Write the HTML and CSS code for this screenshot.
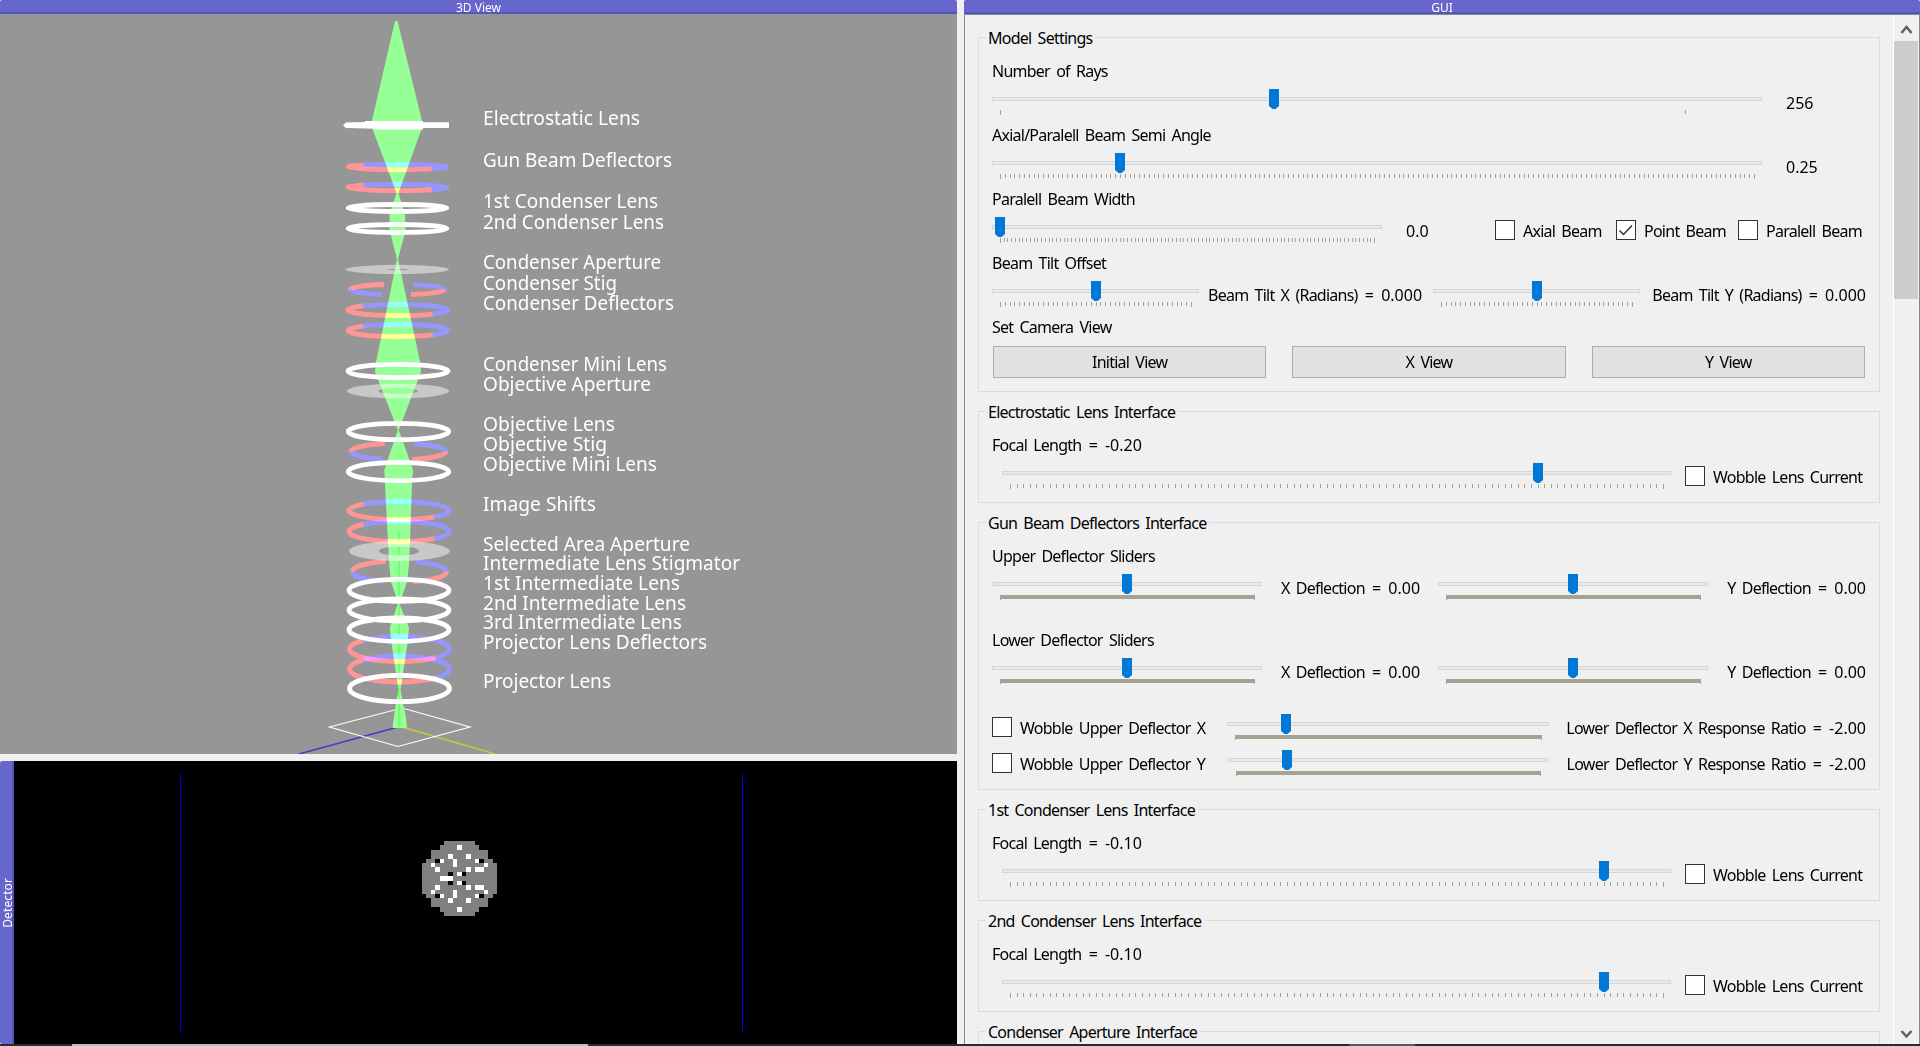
FILE: index.html
```html
<!DOCTYPE html>
<html lang="en">
<head>
<meta charset="utf-8">
<title>3D View</title>
<link rel="stylesheet" href="styles.css">
</head>
<body>
<div class="app">
<main class="workspace">
  <div class="left-dock">
    <section class="dock view-dock">
      <header class="dock-title">3D View</header>
      <svg class="scene" viewBox="0 14 957 740" width="957" height="740">
        <g class="thin">
          <path class="axis-x" d="M398 727L299 754"/>
          <path class="axis-y" d="M402 727L495 754"/>
          <path class="floor" d="M329.500 727L402 708L470 727L398 746.500Z"/>
        </g>
        <path class="beam" d="M395 21h2.500L423 125L398.500 193L405 215L405.700 230L398 259L415 338L420 362L421 372L398.800 430L413 470L412 485L410 542L409 565L407 582L402 596L399 603L404 615L409 628L407 647L405 660L403 673L400.500 690L403 703L406 717L407 728H392.500L394 717L396 703L398.500 690L396 673L394 660L392 647L389.700 628L394 615L398 603L396 596L391 582L389.300 565L388 542L385 485L384.300 470L397.800 430L375 372L376 362L381 338L397 259L389.500 230L389.500 215L396.500 193L371 125Z"/>
        <path class="beam-core" d="M399 531V727"/>
        <g class="aperture">
          <path d="M345.500 269.500a51.700 4.700 0 1 0 103.400 0a51.700 4.700 0 1 0-103.400 0ZM387 269.500a10.500.6 0 1 0 21 0a10.500.6 0 1 0-21 0Z"/>
          <path d="M347 391a51 7.300 0 1 0 102 0a51 7.300 0 1 0-102 0ZM378 391a20 3 0 1 0 40 0a20 3 0 1 0-40 0Z"/>
          <path d="M349 551a50.300 10 0 1 0 100.600 0a50.300 10 0 1 0-100.600 0ZM379 551a20 4.500 0 1 0 40 0a20 4.500 0 1 0-40 0Z"/>
        </g>
        <g class="red">
          <g class="half">
            <ellipse pathLength="100" cx="397.500" cy="167" rx="49.500" ry="2.700"/>
            <ellipse pathLength="100" cx="397.500" cy="187.500" rx="49.500" ry="3.100"/>
            <ellipse pathLength="100" cx="398" cy="310" rx="50" ry="5.600"/>
            <ellipse pathLength="100" cx="398" cy="330.500" rx="50" ry="6.100"/>
            <ellipse pathLength="100" cx="399" cy="510.500" rx="50" ry="9"/>
            <ellipse pathLength="100" cx="399" cy="531.500" rx="50" ry="10"/>
            <ellipse pathLength="100" cx="399.500" cy="649" rx="50" ry="12.500"/>
            <ellipse pathLength="100" cx="399.500" cy="669" rx="50" ry="13"/>
          </g>
          <g class="quarter">
            <ellipse pathLength="100" cx="397.500" cy="289.500" rx="47.500" ry="5.200"/>
            <ellipse pathLength="100" cx="398.500" cy="451.500" rx="47.500" ry="8.200"/>
            <ellipse pathLength="100" cx="399.500" cy="571.500" rx="47" ry="10.600"/>
          </g>
        </g>
        <g class="blue">
          <g class="half">
            <ellipse pathLength="100" cx="397.500" cy="167" rx="49.500" ry="2.700"/>
            <ellipse pathLength="100" cx="397.500" cy="187.500" rx="49.500" ry="3.100"/>
            <ellipse pathLength="100" cx="398" cy="310" rx="50" ry="5.600"/>
            <ellipse pathLength="100" cx="398" cy="330.500" rx="50" ry="6.100"/>
            <ellipse pathLength="100" cx="399" cy="510.500" rx="50" ry="9"/>
            <ellipse pathLength="100" cx="399" cy="531.500" rx="50" ry="10"/>
            <ellipse pathLength="100" cx="399.500" cy="649" rx="50" ry="12.500"/>
            <ellipse pathLength="100" cx="399.500" cy="669" rx="50" ry="13"/>
          </g>
          <g class="quarter">
            <ellipse pathLength="100" cx="397.500" cy="289.500" rx="47.500" ry="5.200"/>
            <ellipse pathLength="100" cx="398.500" cy="451.500" rx="47.500" ry="8.200"/>
            <ellipse pathLength="100" cx="399.500" cy="571.500" rx="47" ry="10.600"/>
          </g>
        </g>
        <g class="lens">
          <path d="M343 125.300L346 122.500L365 122V121H423V122.300H449V128H423V129.500H376V128.700L346 128Z"/>
          <ellipse cx="397.500" cy="208" rx="49.500" ry="3.500"/>
          <ellipse cx="397.500" cy="228.500" rx="49.500" ry="4"/>
          <ellipse cx="398" cy="371" rx="50" ry="6.700"/>
          <ellipse cx="398.500" cy="431.500" rx="50.200" ry="8.200"/>
          <ellipse cx="398.500" cy="471.500" rx="50.200" ry="9.200"/>
          <ellipse cx="399" cy="590.300" rx="50" ry="11"/>
          <ellipse cx="399" cy="610" rx="50" ry="11"/>
          <ellipse cx="399" cy="629.700" rx="50" ry="11.700"/>
          <ellipse cx="399.500" cy="688.500" rx="50" ry="13.200"/>
        </g>
        <g class="labels">
          <text x="483" y="124.500" textLength="157" lengthAdjust="spacingAndGlyphs">Electrostatic Lens</text>
          <text x="483" y="166.500" textLength="189" lengthAdjust="spacingAndGlyphs">Gun Beam Deflectors</text>
          <text x="483" y="207.500" textLength="175" lengthAdjust="spacingAndGlyphs">1st Condenser Lens</text>
          <text x="483" y="228.500" textLength="181" lengthAdjust="spacingAndGlyphs">2nd Condenser Lens</text>
          <text x="483" y="268.500" textLength="178" lengthAdjust="spacingAndGlyphs">Condenser Aperture</text>
          <text x="483" y="289.500" textLength="134" lengthAdjust="spacingAndGlyphs">Condenser Stig</text>
          <text x="483" y="309.500" textLength="191" lengthAdjust="spacingAndGlyphs">Condenser Deflectors</text>
          <text x="483" y="370.500" textLength="184" lengthAdjust="spacingAndGlyphs">Condenser Mini Lens</text>
          <text x="483" y="390.500" textLength="168" lengthAdjust="spacingAndGlyphs">Objective Aperture</text>
          <text x="483" y="430.500" textLength="132" lengthAdjust="spacingAndGlyphs">Objective Lens</text>
          <text x="483" y="450.500" textLength="124" lengthAdjust="spacingAndGlyphs">Objective Stig</text>
          <text x="483" y="470.500" textLength="174" lengthAdjust="spacingAndGlyphs">Objective Mini Lens</text>
          <text x="483" y="510.500" textLength="113" lengthAdjust="spacingAndGlyphs">Image Shifts</text>
          <text x="483" y="550.500" textLength="207" lengthAdjust="spacingAndGlyphs">Selected Area Aperture</text>
          <text x="483" y="569.500" textLength="257" lengthAdjust="spacingAndGlyphs">Intermediate Lens Stigmator</text>
          <text x="483" y="589.500" textLength="197" lengthAdjust="spacingAndGlyphs">1st Intermediate Lens</text>
          <text x="483" y="609.500" textLength="203" lengthAdjust="spacingAndGlyphs">2nd Intermediate Lens</text>
          <text x="483" y="628.500" textLength="199" lengthAdjust="spacingAndGlyphs">3rd Intermediate Lens</text>
          <text x="483" y="648.500" textLength="224" lengthAdjust="spacingAndGlyphs">Projector Lens Deflectors</text>
          <text x="483" y="687.500" textLength="128" lengthAdjust="spacingAndGlyphs">Projector Lens</text>
        </g>
      </svg>
    </section>
    <section class="dock detector-dock">
      <header class="dock-title side-title"><span>Detector</span></header>
      <svg class="detector" viewBox="14 761 943 283" width="943" height="283">
        <path class="roi" d="M180 774h1v259h-1zM742 774h1v259h-1z"/>
        <g transform="translate(422 841) scale(4.412)">
          <path fill="#808080" d="M5 0h7v1h1v1h2v2h1v1h1v7h-1v1h-1v2h-2v1h-1v1h-7v-1h-1v-1h-2v-2h-1v-1h-1v-7h1v-1h1v-2h2v-1h1z"/>
          <path fill="#000" d="M3 4h1v1h-1zM13 4h1v1h-1zM6 7h1v1h-1zM9 7h1v1h-1zM6 9h1v1h-1zM9 9h1v1h-1zM3 12h1v1h-1zM13 12h1v1h-1z"/>
          <path fill="#fff" d="M8 1h1v1h-1zM6 3h1v1h-1zM10 3h1v1h-1zM4 4h1v1h-1zM7 4h1v2h-1zM12 4h1v1h-1zM2 5h1v1h-1zM14 5h1v1h-1zM3 6h1v1h-1zM10 6h1v1h-1zM12 6h2v1h-2zM8 7h1v1h-1zM4 8h3v1h-3zM8 9h1v1h-1zM3 10h1v1h-1zM10 10h1v1h-1zM12 10h2v1h-2zM2 11h1v1h-1zM7 11h1v2h-1zM14 11h1v1h-1zM4 12h1v1h-1zM12 12h1v1h-1zM6 13h1v1h-1zM10 13h1v1h-1zM8 15h1v1h-1z"/>
        </g>
      </svg>
    </section>
  </div>

  <section class="dock gui-dock">
    <header class="dock-title">GUI</header>
    <div class="scroll-area">
      <div class="panel">
        <fieldset class="group model">
          <legend>Model Settings</legend>
          <div class="label">Number of Rays</div>
          <div class="row">
            <div class="slider w770"><svg class="ticks"><path class="end" d="M8.500 0v5"/><path class="end" d="M693.500 0v4"/></svg><i class="handle" style="left:277px"></i></div>
            <span class="value g24"><span class="num">256</span></span>
          </div>
          <div class="label">Axial/Paralell Beam Semi Angle</div>
          <div class="row">
            <div class="slider w770"><svg class="ticks"><path class="minor" stroke-dasharray="1 3.803" d="M8 2h755"/><path class="end" d="M8.500 0v5M762.500 0v5"/></svg><i class="handle" style="left:123px"></i></div>
            <span class="value g24"><span class="num">0.25</span></span>
          </div>
          <div class="label">Paralell Beam Width</div>
          <div class="row">
            <div class="slider w390"><svg class="ticks"><path class="minor" stroke-dasharray="1 2.740" d="M8 2h375"/><path class="end" d="M8.500 0v5M382.500 0v5"/></svg><i class="handle" style="left:3px"></i></div>
            <span class="value g24"><span class="num">0.0</span></span>
            <div class="checks">
              <label class="check"><i class="box"></i><span>Axial Beam</span></label>
              <label class="check"><i class="box"><svg viewBox="0 0 18 18"><path d="M2.500 9.500L6.500 13.500L15 4.500"/></svg></i><span>Point Beam</span></label>
              <label class="check"><i class="box"></i><span>Paralell Beam</span></label>
            </div>
          </div>
          <div class="label">Beam Tilt Offset</div>
          <div class="row">
            <div class="slider w207"><svg class="ticks"><path class="minor" stroke-dasharray="1 3.775" d="M8 2h192"/><path class="end" d="M8.500 0v5M199.500 0v5"/></svg><i class="handle" style="left:99px"></i></div>
            <span class="value tilt">Beam Tilt X (Radians)<span class="num"> = 0.000</span></span>
            <div class="slider w207"><svg class="ticks"><path class="minor" stroke-dasharray="1 3.775" d="M8 2h192"/><path class="end" d="M8.500 0v5M199.500 0v5"/></svg><i class="handle" style="left:99px"></i></div>
            <span class="value last">Beam Tilt Y (Radians)<span class="num"> = 0.000</span></span>
          </div>
          <div class="label">Set Camera View</div>
          <div class="buttons">
            <button>Initial View</button><button>X View</button><button>Y View</button>
          </div>
        </fieldset>

        <fieldset class="group lens-group">
          <legend>Electrostatic Lens Interface</legend>
          <div class="label">Focal Length<span class="num"> = -0.20</span></div>
          <div class="row inset">
            <div class="slider w669"><svg class="ticks"><path class="minor" stroke-dasharray="1 5.596" d="M8 2h654"/><path class="end" d="M8.500 0v5M661.500 0v5"/></svg><i class="handle" style="left:531px"></i></div>
            <label class="check wobble"><i class="box"></i><span>Wobble Lens Current</span></label>
          </div>
        </fieldset>

        <fieldset class="group deflector-group">
          <legend>Gun Beam Deflectors Interface</legend>
          <div class="label">Upper Deflector Sliders</div>
          <div class="row">
            <div class="slider w270"><svg class="ticks"><path class="minor" d="M8 2h255"/><path class="end" d="M8.500 0v5M262.500 0v5"/></svg><i class="handle" style="left:130px"></i></div>
            <span class="value defl">X Deflection<span class="num"> = 0.00</span></span>
            <div class="slider w270"><svg class="ticks"><path class="minor" d="M8 2h255"/><path class="end" d="M8.500 0v5M262.500 0v5"/></svg><i class="handle" style="left:130px"></i></div>
            <span class="value last">Y Deflection<span class="num"> = 0.00</span></span>
          </div>
          <div class="label spaced">Lower Deflector Sliders</div>
          <div class="row">
            <div class="slider w270"><svg class="ticks"><path class="minor" d="M8 2h255"/><path class="end" d="M8.500 0v5M262.500 0v5"/></svg><i class="handle" style="left:130px"></i></div>
            <span class="value defl">X Deflection<span class="num"> = 0.00</span></span>
            <div class="slider w270"><svg class="ticks"><path class="minor" d="M8 2h255"/><path class="end" d="M8.500 0v5M262.500 0v5"/></svg><i class="handle" style="left:130px"></i></div>
            <span class="value last">Y Deflection<span class="num"> = 0.00</span></span>
          </div>
          <div class="row compact first">
            <label class="check upper"><i class="box"></i><span>Wobble Upper Deflector X</span></label>
            <div class="slider w322"><svg class="ticks"><path class="minor" d="M8 2h307"/><path class="end" d="M8.500 0v5M314.500 0v5"/></svg><i class="handle" style="left:54px"></i></div>
            <span class="value last">Lower Deflector X Response Ratio<span class="num"> = -2.00</span></span>
          </div>
          <div class="row compact">
            <label class="check upper upper-y"><i class="box"></i><span>Wobble Upper Deflector Y</span></label>
            <div class="slider w320"><svg class="ticks"><path class="minor" d="M8 2h305"/><path class="end" d="M8.500 0v5M312.500 0v5"/></svg><i class="handle" style="left:54px"></i></div>
            <span class="value last">Lower Deflector Y Response Ratio<span class="num"> = -2.00</span></span>
          </div>
        </fieldset>

        <fieldset class="group lens-group">
          <legend>1st Condenser Lens Interface</legend>
          <div class="label">Focal Length<span class="num"> = -0.10</span></div>
          <div class="row inset">
            <div class="slider w669"><svg class="ticks"><path class="minor" stroke-dasharray="1 5.596" d="M8 2h654"/><path class="end" d="M8.500 0v5M661.500 0v5"/></svg><i class="handle" style="left:597px"></i></div>
            <label class="check wobble"><i class="box"></i><span>Wobble Lens Current</span></label>
          </div>
        </fieldset>

        <fieldset class="group lens-group">
          <legend>2nd Condenser Lens Interface</legend>
          <div class="label">Focal Length<span class="num"> = -0.10</span></div>
          <div class="row inset">
            <div class="slider w669"><svg class="ticks"><path class="minor" stroke-dasharray="1 5.596" d="M8 2h654"/><path class="end" d="M8.500 0v5M661.500 0v5"/></svg><i class="handle" style="left:597px"></i></div>
            <label class="check wobble"><i class="box"></i><span>Wobble Lens Current</span></label>
          </div>
        </fieldset>

        <fieldset class="group lens-group">
          <legend>Condenser Aperture Interface</legend>
        </fieldset>
      </div>
      <div class="scrollbar">
        <svg class="arrow" viewBox="0 0 24 26" width="24" height="26"><path d="M7.500 18L12.500 12L17.500 18"/></svg>
        <div class="thumb"></div>
        <svg class="arrow" viewBox="0 0 24 26" width="24" height="26"><path d="M7.500 13L12.500 18.500L17.500 13"/></svg>
      </div>
    </div>
  </section>
</main>
<footer class="strip"><div class="strip-light"></div><div class="strip-mid"></div></footer>
</div>
</body>
</html>
```
FILE: styles.css
```css
* { box-sizing: border-box; }

body {
  margin: 0;
  width: 1920px;
  height: 1046px;
  overflow: hidden;
  background: #f0f0f0;
  color: #000;
  font: 16px/24px "Noto Sans", sans-serif;
}

.app { display: flex; flex-direction: column; height: 1046px; }
.workspace { display: flex; gap: 7px; height: 1044px; }
.left-dock { display: flex; flex-direction: column; gap: 7px; width: 957px; }
.dock { display: flex; flex-direction: column; }
.gui-dock { width: 956px; }

.dock-title {
  height: 14px;
  background: #6666cc;
  border-bottom: 2px solid #5555bb;
  border-radius: 2px 2px 0 0;
  color: #fff;
  font-size: 12px;
  line-height: 15px;
  text-align: center;
}

.scene { display: block; background: #969696; }
.detector-dock { flex-direction: row; height: 283px; }
.side-title {
  display: flex;
  align-items: center;
  justify-content: center;
  width: 14px;
  height: 283px;
  border-bottom: 0;
  border-right: 2px solid #5555bb;
  border-radius: 2px 0 0 2px;
}
.side-title span {
  writing-mode: vertical-rl;
  transform: rotate(180deg);
  margin-left: 3px;
  line-height: 14px;
  letter-spacing: 0.1px;
}
.detector { display: block; background: #000; shape-rendering: crispEdges; }
.roi { fill: #0000e0; }

.thin { fill: none; stroke-width: 1.2; }
.axis-x { stroke: #3f3fc8; stroke-width: 1.5; }
.axis-y { stroke: #c8c83c; stroke-width: 1.5; }
.floor { stroke: #fff; }
.beam { fill: #96ff96; }
.beam-core { stroke: #5cff5c; stroke-width: 1.2; }
.aperture path { fill: #c8c8c8; fill-rule: evenodd; mix-blend-mode: lighten; }
.red ellipse, .blue ellipse, .lens ellipse { fill: none; stroke-width: 4.8; }
.red, .blue, .lens, .aperture { mix-blend-mode: lighten; }
.red { stroke: #ff9696; }
.blue { stroke: #9696ff; }
.lens { stroke: #fff; }
.lens path { fill: #fff; stroke: none; }

/* deflectors are two half rings, stigmators four separated arcs */
.half { stroke-dasharray: 50 50; }
.red .half { stroke-dashoffset: -8; }
.blue .half { stroke-dashoffset: -58; }
.quarter { stroke-dasharray: 18 32; }
.blue .quarter { stroke-dasharray: 17 33; stroke-dashoffset: -33; }
.labels { fill: #fff; font-size: 20px; }

.scroll-area {
  display: flex;
  height: 1030px;
  overflow: hidden;
  border: 1px solid #828790;
  border-bottom: 0;
  letter-spacing: -0.75px;
  word-spacing: 2.75px;
}
.num { letter-spacing: 0; word-spacing: 3px; }
.panel { flex: 1; padding: 22px 13px 0; overflow: hidden; }

.group {
  position: relative;
  height: 92px;
  min-width: 0;
  margin: 0 0 19px;
  padding: 21px 0 0 13px;
  border: 1px solid #dcdcdc;
}
.model { height: 355px; }
.deflector-group { height: 268px; }
legend {
  position: absolute;
  top: -12px;
  left: 7px;
  padding: 0 3px 0 2px;
  background: #f0f0f0;
  white-space: nowrap;
}
.label { height: 24px; white-space: nowrap; }
.spaced { margin-top: 20px; }

.row { display: flex; align-items: flex-start; width: 874px; height: 40px; }
.inset { padding-left: 10px; }
.compact { height: 36px; }
.first { margin-top: 16px; }

.slider { position: relative; flex: none; height: 26px; margin-top: 6px; padding-top: 8px; }
.slider::before { content: ""; display: block; height: 2px; border: 1px solid #d6d6d6; background: #e7eaea; }
.w770 { width: 770px; }
.w669 { width: 669px; }
.w390 { width: 390px; }
.w322 { width: 322px; }
.w320 { width: 320px; }
.w270 { width: 270px; }
.w207 { width: 207px; }
.ticks { display: block; width: 100%; height: 5px; margin-top: 9px; shape-rendering: crispEdges; stroke: #a6a193; }
.minor { stroke-width: 4; }
.end { stroke-width: 1; }
.handle {
  position: absolute;
  top: 0;
  width: 10px;
  height: 20px;
  background: #0078d7;
  clip-path: polygon(0 0, 100% 0, 100% 85%, 65% 100%, 35% 100%, 0 85%);
}

.value { margin-top: 8px; white-space: nowrap; }
.g24 { margin-left: 24px; }
.tilt { width: 234px; padding-left: 9px; }
.defl { width: 176px; padding-left: 19px; }
.last { margin-left: auto; }

.checks { display: grid; grid-template-columns: 121px 122px 128px; margin-left: auto; }
.check { display: flex; gap: 8px; white-space: nowrap; }
.check span { margin-top: 8px; }
.box { flex: none; width: 20px; height: 20px; margin-top: 9px; border: 1px solid #333; background: #fff; }
.box svg { display: block; fill: none; stroke: #333; stroke-width: 1.5; }
.wobble { margin-left: 14px; }
.upper { width: 235px; }
.upper-y { width: 236px; }

.buttons { display: flex; gap: 26px; width: 873px; padding: 7px 0 0 1px; }
button {
  flex: 1;
  height: 32px;
  padding: 0;
  border: 1px solid #adadad;
  background: #e1e1e1;
  color: #000;
  font: inherit;
  letter-spacing: inherit;
  word-spacing: inherit;
}

.scrollbar { display: flex; flex-direction: column; flex: none; width: 26px; padding-right: 1px; border-left: 1px solid #fff; }
.arrow { flex: none; fill: none; stroke: #606060; stroke-width: 2.5; }
.thumb { height: 258px; margin-bottom: auto; background: #cdcdcd; }

.strip { display: flex; height: 2px; padding-left: 72px; background: #2a2a2a; }
.strip-light { width: 516px; background: #bdbdbd; }
.strip-mid { width: 66px; margin-left: 761px; background: #5a5a5a; }
```
